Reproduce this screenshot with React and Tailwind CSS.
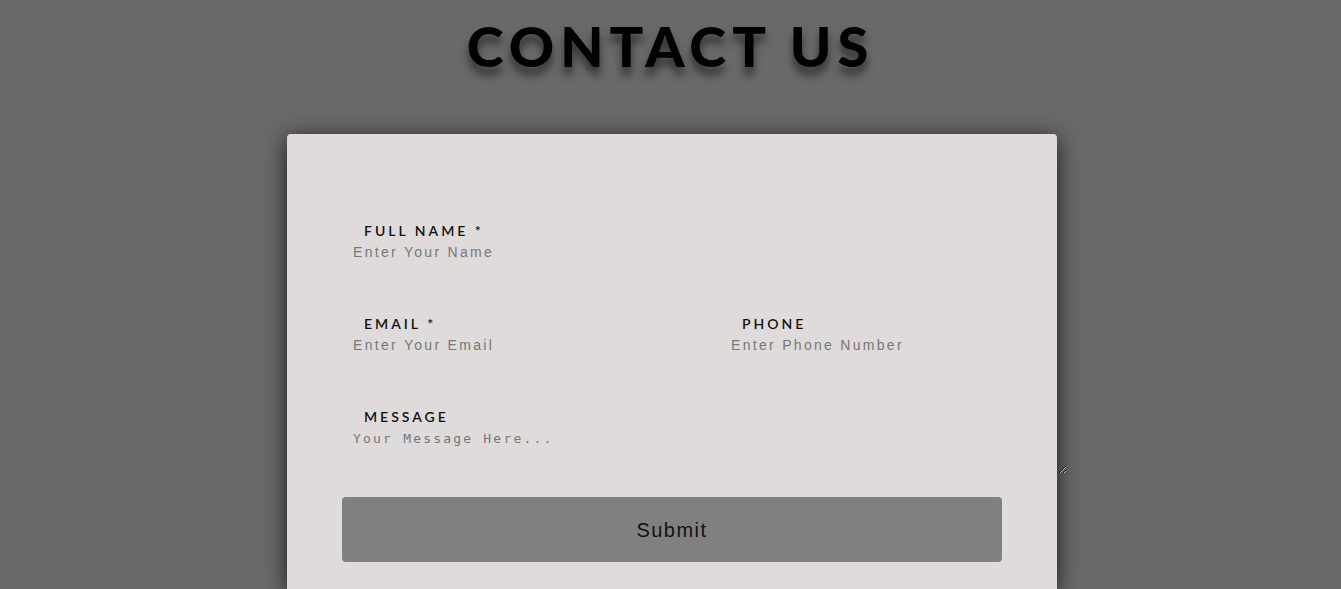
export default function App() {
  const label = "block pl-[22px] text-[14px] leading-[18px] font-semibold tracking-[3px] text-[#111] uppercase font-['Lato','Open_Sans',sans-serif]";
  const input = "block w-full mt-[1px] bg-transparent border-0 outline-none px-[11px] h-[22px] text-[14px] tracking-[2.3px] placeholder:text-[#777] text-[#333] font-['Liberation_Sans',Arial,sans-serif]";
  return (
    <div className="h-screen bg-[#696969] overflow-hidden">
      <h1 className="text-center text-[56px] leading-[70px] pt-[11px] font-black tracking-[6px] text-black [text-shadow:0_8px_8px_rgba(0,0,0,0.55)] font-['Lato','Open_Sans',sans-serif]">
        CONTACT US
      </h1>
      <div className="ml-[287px] mt-[53px] w-[770px] h-[455px] bg-[#e0dbdb] rounded-t-[4px] shadow-[0_4px_22px_rgba(0,0,0,0.75)] pt-[88px] px-[55px]">
        <div className="flex flex-col">
          <div className="h-[93px]">
            <label className={label}>Full Name *</label>
            <input className={input} placeholder="Enter Your Name" />
          </div>
          <div className="h-[93px] flex">
            <div className="w-[378px]">
              <label className={label}>Email *</label>
              <input className={input} placeholder="Enter Your Email" />
            </div>
            <div className="flex-1">
              <label className={label}>Phone</label>
              <input className={input} placeholder="Enter Phone Number" />
            </div>
          </div>
          <div>
            <label className={label}>Message</label>
            <textarea
              className="block w-[725px] h-[48px] bg-transparent border-0 outline-none px-[11px] pt-[3px] pb-[1px] text-[13px] tracking-[2.2px] placeholder:text-[#777] resize font-['DejaVu_Sans_Mono','Liberation_Mono',monospace]"
              placeholder="Your Message Here..."
            />
          </div>
          <button className="mt-[23px] w-[660px] h-[65px] bg-[#808080] rounded-[4px] text-[20px] tracking-[1.5px] text-[#111] font-['Liberation_Sans',Arial,sans-serif]">
            Submit
          </button>
        </div>
      </div>
    </div>
  );
}
